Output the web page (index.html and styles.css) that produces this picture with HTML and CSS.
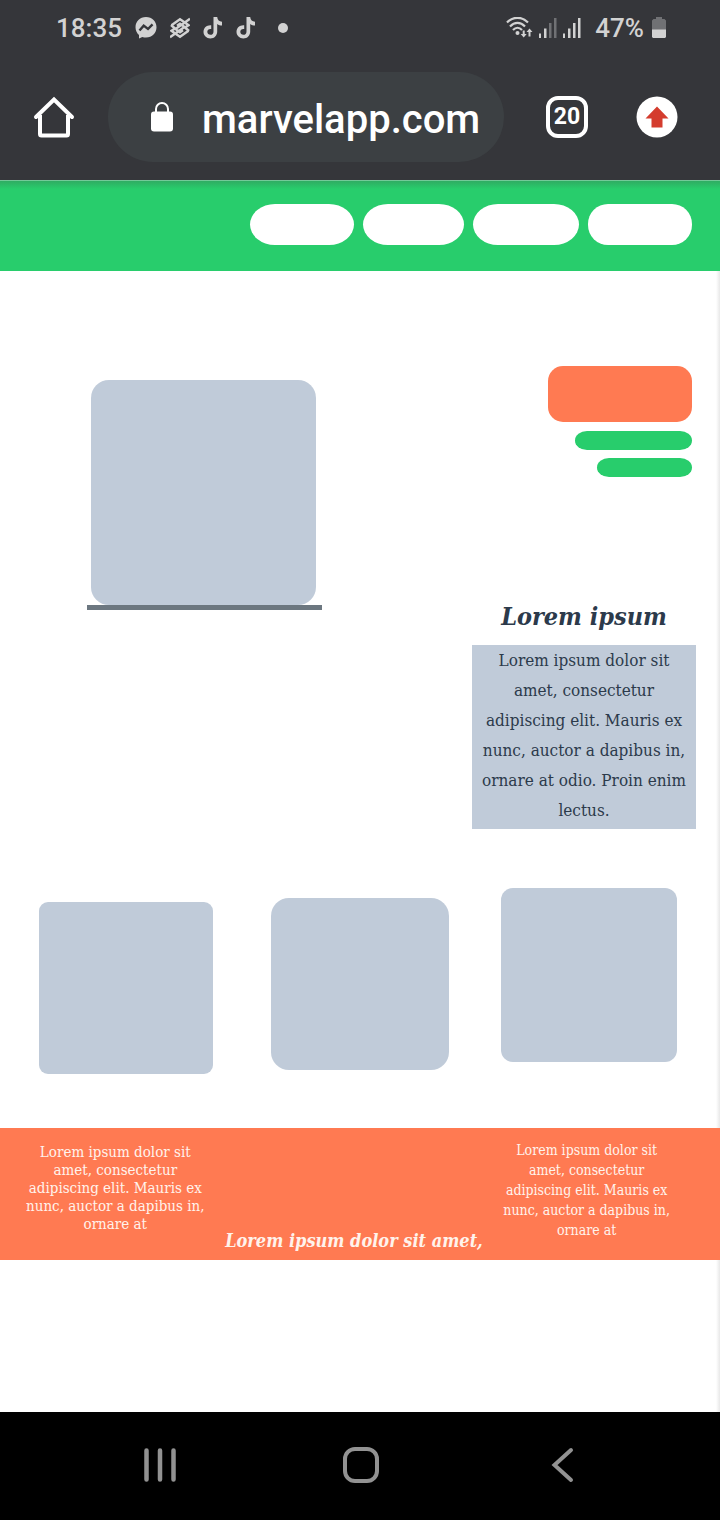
FILE: index.html
```html
<!DOCTYPE html>
<html lang="en">
<head>
<meta charset="utf-8">
<meta name="viewport" content="width=device-width, initial-scale=1">
<title>marvelapp.com</title>
<link rel="stylesheet" href="styles.css">
</head>
<body>
<div class="screen">
  <header class="chrome">
    <div class="status">
      <div class="status-left">
        <span>18:35</span>
        <svg class="messenger" width="22" height="22" viewBox="0 0 22 22" aria-hidden="true">
          <path fill="#d2d2d2" d="M11 0C4.800 0 .5 4.500.5 10.200c0 3.200 1.300 5.800 3.500 7.700V21.500l3.300-1.600c1.200.4 2.400.5 3.700.5 6.200 0 10.500-4.500 10.500-10.200S17.200 0 11 0z"/>
          <path fill="none" stroke="#35363a" stroke-width="2.400" d="M4.500 13.500l4.200-4.900 4.300 3.400 4.500-4.600"/>
        </svg>
        <svg class="bank" width="20" height="22" viewBox="0 0 20 22" aria-hidden="true">
          <g fill="none" stroke="#d2d2d2" stroke-width="2.400">
            <path d="M1.500 8.300L10 2.300l4.800 3.200L5.500 12l4.500 3.200 3-2"/>
            <path d="M18.500 13.700L10 19.700l-4.800-3.200 9.300-6.500L10 6.800l-3 2"/>
            <path d="M14.800 5.500L20 1.800M5.200 16.500L0 20.200M1 8l4.500 4M19 14l-4.500-4M14.800 5.500l3.700 2.700-4 2.500M5.200 16.500l-3.700-2.700 4-2.500"/>
          </g>
        </svg>
        <svg class="tiktok" width="20" height="22" viewBox="0 0 20 22" aria-hidden="true">
          <path fill="#d2d2d2" d="M10.500 0h3.700c.3 2.900 2 4.600 4.800 4.800v3.700c-1.800 0-3.400-.5-4.800-1.500v7.500c0 4.200-3 7-6.800 7S.5 18.600.5 14.800C.5 10.600 4 7.700 8.200 8.200V12c-2.200-.5-3.900.8-3.900 2.800 0 1.800 1.400 3 3.100 3 1.900 0 3.100-1.300 3.100-3.400z"/>
        </svg>
        <svg class="tiktok" width="20" height="22" viewBox="0 0 20 22" aria-hidden="true">
          <path fill="#d2d2d2" d="M10.500 0h3.700c.3 2.900 2 4.600 4.800 4.800v3.700c-1.800 0-3.400-.5-4.800-1.500v7.500c0 4.200-3 7-6.800 7S.5 18.600.5 14.800C.5 10.600 4 7.700 8.200 8.200V12c-2.200-.5-3.900.8-3.900 2.800 0 1.800 1.400 3 3.100 3 1.900 0 3.100-1.300 3.100-3.400z"/>
        </svg>
        <span class="dot"></span>
      </div>
      <div class="status-right">
        <svg width="27" height="22" viewBox="0 0 27 22" aria-hidden="true">
          <g fill="none" stroke="#d2d2d2" stroke-width="2.200">
            <path d="M1 5.500C7-.8 16-.8 22 5.500M4 9.500c4.500-4.800 10.500-4.800 15 0M7 13c2.800-3 6.200-3 9 0"/>
          </g>
          <circle cx="11.500" cy="16" r="2" fill="#d2d2d2"/>
          <path fill="#d2d2d2" d="M16.700 13.500h2v3.500h2l-3 3.500-3-3.500h2zM22.500 19.500h2V15h2l-3-3.500-3 3.500h2z"/>
        </svg>
        <svg width="18" height="20" viewBox="0 0 18 20" aria-hidden="true">
          <path fill="#d2d2d2" d="M0 15.500h2V20H0zM5 10.500h2.500V20H5z"/>
          <path fill="#707174" d="M10 5h2.500v15H10zM15 0h2.500v20H15z"/>
        </svg>
        <svg width="18" height="20" viewBox="0 0 18 20" aria-hidden="true">
          <path fill="#d2d2d2" d="M0 15.500h2V20H0zM5 10.500h2.500V20H5zM10 5h2.500v15H10zM15 0h2.500v20H15z"/>
        </svg>
        <span class="percent">47%</span>
        <svg width="14" height="22" viewBox="0 0 14 22" aria-hidden="true">
          <path fill="#707174" d="M4 0h6v2h2.500l1.500 1.500V13H0V3.500L1.500 2H4z"/>
          <path fill="#d2d2d2" d="M0 12.500h14V20l-1 1H1l-1-1z"/>
        </svg>
      </div>
    </div>
    <div class="toolbar">
      <button class="tool" type="button" aria-label="Home">
        <svg width="42" height="42" viewBox="0 0 42 42" aria-hidden="true">
          <path fill="none" stroke="#fff" stroke-width="4" stroke-linejoin="round" d="M7 19v19q0 1.500 1.500 1.500h25q1.500 0 1.500-1.500V19"/>
          <path fill="none" stroke="#fff" stroke-width="4" stroke-linecap="round" d="M3 21L21 3.500 39 21"/>
        </svg>
      </button>
      <button class="address" type="button">
        <svg width="24" height="34" viewBox="0 0 24 34" aria-hidden="true">
          <rect x="1" y="9.500" width="22" height="20" rx="3" fill="#fff"/>
          <path fill="none" stroke="#fff" stroke-width="2" d="M6 11V7a6 6 0 0 1 12 0v4"/>
        </svg>
        <span>marvelapp.com</span>
      </button>
      <button class="tabs" type="button" aria-label="20 open tabs">20</button>
      <button class="tool update" type="button" aria-label="Update available">
        <svg width="42" height="42" viewBox="0 0 42 42" aria-hidden="true">
          <circle cx="21" cy="21" r="20.500" fill="#fff"/>
          <path fill="#d43c2e" d="M21 10.500L32.500 22.500H26.500V31.500H15.500V22.500H9.500z"/>
        </svg>
      </button>
    </div>
  </header>

  <main class="page">
    <nav class="nav" aria-label="Main">
      <a class="pill" href="#"></a>
      <a class="pill short" href="#"></a>
      <a class="pill wide" href="#"></a>
      <a class="pill end" href="#"></a>
    </nav>

    <section class="hero">
      <div class="figure">
        <div class="picture"></div>
        <div class="rule"></div>
      </div>
      <div class="side">
        <div class="actions">
          <div class="banner"></div>
          <div class="bar"></div>
          <div class="bar bar-short"></div>
        </div>
        <div class="intro">
          <h1>Lorem ipsum</h1>
          <p>Lorem ipsum dolor sit<br>amet, consectetur<br>adipiscing elit. Mauris ex<br>nunc, auctor a dapibus in,<br>ornare at odio. Proin enim<br>lectus.</p>
        </div>
      </div>
    </section>

    <section class="cards">
      <div class="card first"></div>
      <div class="card second"></div>
      <div class="card third"></div>
    </section>

    <footer class="footer">
      <p class="note">Lorem ipsum dolor sit<br>amet, consectetur<br>adipiscing elit. Mauris ex<br>nunc, auctor a dapibus in,<br>ornare at</p>
      <p class="tagline">Lorem ipsum dolor sit amet,</p>
      <p class="note loose">Lorem ipsum dolor sit<br>amet, consectetur<br>adipiscing elit. Mauris ex<br>nunc, auctor a dapibus in,<br>ornare at</p>
    </footer>
  </main>

  <nav class="system" aria-label="System">
    <button type="button" aria-label="Recent apps">
      <svg width="36" height="36" viewBox="0 0 36 36" aria-hidden="true"><path fill="none" stroke="#929292" stroke-width="4.500" stroke-linecap="round" d="M4.500 3.500v29M18 3.500v29M31.500 3.500v29"/></svg>
    </button>
    <button type="button" aria-label="Home">
      <svg width="36" height="36" viewBox="0 0 36 36" aria-hidden="true"><rect x="2" y="2" width="32" height="32" rx="10" fill="none" stroke="#929292" stroke-width="4"/></svg>
    </button>
    <button type="button" aria-label="Back">
      <svg width="36" height="36" viewBox="0 0 36 36" aria-hidden="true"><path fill="none" stroke="#929292" stroke-width="4" stroke-linecap="round" d="M27 3L10.500 18 27 33"/></svg>
    </button>
  </nav>
</div>
</body>
</html>
```
FILE: styles.css
```css
* {
  box-sizing: border-box;
}

body,
h1,
p {
  margin: 0;
}

body {
  font-family: Roboto, sans-serif;
  background: #fff;
}

button {
  padding: 0;
  border: 0;
  background: none;
  color: inherit;
  font: inherit;
}

svg {
  display: block;
  flex: none;
}

.screen {
  display: flex;
  flex-direction: column;
  min-height: 100vh;
}

/* Browser chrome */

.chrome {
  padding-bottom: 18px;
  background: #35363a;
  color: #fff;
}

.status {
  display: flex;
  justify-content: space-between;
  align-items: center;
  height: 56px;
  padding: 0 54px 0 56px;
  color: #d2d2d2;
  font-size: 26px;
  font-weight: 500;
}

.status-left,
.status-right {
  display: flex;
  align-items: center;
}

.status-left {
  gap: 13px;
}

.status-right {
  gap: 6px;
}

.percent {
  margin: 0 2px 0 8px;
}

.dot {
  width: 10px;
  height: 10px;
  margin-left: 9px;
  border-radius: 50%;
  background: #d2d2d2;
}

.toolbar {
  display: flex;
  align-items: center;
  padding: 16px 42px 0 33px;
}

.address {
  display: flex;
  flex: 1;
  align-items: center;
  gap: 28px;
  height: 90px;
  margin: 0 42px 0 33px;
  padding: 4px 22px 0 42px;
  border-radius: 45px;
  background: #3c4043;
  font-size: 40px;
  font-weight: 500;
}

.tabs {
  width: 42px;
  height: 42px;
  margin-right: 48px;
  border: 4px solid #fff;
  border-radius: 12px;
  font-size: 23px;
  font-weight: 700;
  line-height: 32px;
}

/* Web page */

.page {
  flex: 1;
  background: linear-gradient(to left, #e8e8e8, #fff 4px);
  color: #2c3a4b;
  font-family: "DejaVu Serif Condensed", "DejaVu Serif", serif;
}

.nav {
  display: flex;
  justify-content: flex-end;
  gap: 9px;
  padding: 23px 28px 26px;
  background: linear-gradient(#2fac62, #28cd6c 8px);
  border-top: 1px solid #73c998;
}

.pill {
  width: 104px;
  height: 41px;
  border-radius: 25px / 50%;
  background: #fff;
}

.short {
  width: 101px;
}

.wide {
  width: 106px;
}

.end {
  border-radius: 20px;
}

.hero {
  display: flex;
  justify-content: space-between;
  padding: 95px 24px 0 87px;
}

.figure {
  width: 235px;
  padding-top: 14px;
}

.picture {
  height: 225px;
  margin: 0 6px 0 4px;
  border-radius: 18px;
  background: #c0cbd9;
}

.rule {
  height: 5px;
  background: #6c7780;
}

.side {
  width: 224px;
}

.actions {
  display: flex;
  flex-direction: column;
  align-items: flex-end;
  gap: 8px;
  padding-right: 4px;
}

.banner {
  width: 144px;
  height: 56px;
  margin-bottom: 1px;
  border-radius: 15px;
  background: #ff7a52;
}

.bar {
  width: 117px;
  height: 19px;
  border-radius: 12px / 50%;
  background: #28cd6c;
}

.bar-short {
  width: 95px;
}

.intro {
  padding-top: 120px;
  text-align: center;
}

.intro h1 {
  margin-bottom: 8px;
  font-size: 25px;
  font-style: italic;
  line-height: 40px;
  white-space: nowrap;
}

.intro p {
  padding: 0 0 4px;
  background: #c0cbd9;
  font-size: 17px;
  line-height: 30px;
  white-space: nowrap;
}

.cards {
  display: flex;
  justify-content: space-between;
  align-items: flex-start;
  padding: 59px 43px 54px 39px;
}

.card {
  width: 176px;
  height: 172px;
  background: #c0cbd9;
}

.first {
  width: 174px;
  margin: 14px 3px 0 0;
  border-radius: 9px;
}

.second {
  width: 178px;
  margin: 10px -3px 0 0;
  border-radius: 18px;
}

.third {
  height: 174px;
  border-radius: 12px;
}

.footer {
  display: flex;
  justify-content: space-between;
  padding: 12px 50px 7px 26px;
  background: #ff7a52;
  color: #fff3ec;
  white-space: nowrap;
}

.note {
  padding: 3px 0 13px;
  font-size: 15px;
  line-height: 18px;
  text-align: center;
}

.loose {
  padding-top: 0;
  font-size: 14px;
  line-height: 20px;
}

.tagline {
  align-self: flex-end;
  font-size: 18px;
  font-style: italic;
  font-weight: 700;
  line-height: 24px;
}

/* Device navigation */

.system {
  display: flex;
  justify-content: space-around;
  align-items: center;
  height: 108px;
  padding: 0 57px 2px 59px;
  background: #000;
}
```
